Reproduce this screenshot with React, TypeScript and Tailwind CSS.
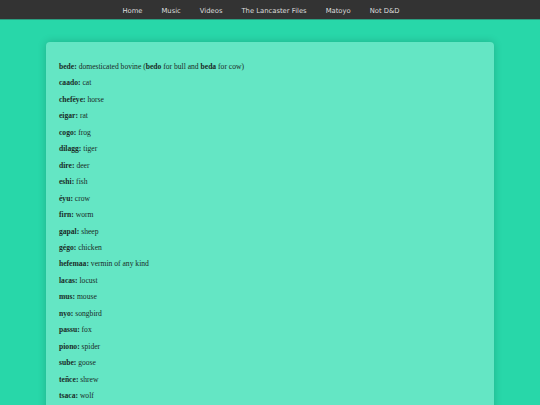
const navItems = ['Home', 'Music', 'Videos', 'The Lancaster Files', 'Matoyo', 'Not D&D'];

type Entry = { word: string; meaning: React.ReactNode };

const entries: Entry[] = [
  {
    word: 'bede',
    meaning: (
      <>
        domesticated bovine (<b>bedo</b> for bull and <b>beda</b> for cow)
      </>
    ),
  },
  { word: 'caado', meaning: 'cat' },
  { word: 'chefëye', meaning: 'horse' },
  { word: 'eigar', meaning: 'rat' },
  { word: 'cogo', meaning: 'frog' },
  { word: 'dilagg', meaning: 'tiger' },
  { word: 'dire', meaning: 'deer' },
  { word: 'eshi', meaning: 'fish' },
  { word: 'éyu', meaning: 'crow' },
  { word: 'firn', meaning: 'worm' },
  { word: 'gapal', meaning: 'sheep' },
  { word: 'gégo', meaning: 'chicken' },
  { word: 'hefemaa', meaning: 'vermin of any kind' },
  { word: 'lacas', meaning: 'locust' },
  { word: 'mus', meaning: 'mouse' },
  { word: 'nyo', meaning: 'songbird' },
  { word: 'passu', meaning: 'fox' },
  { word: 'piono', meaning: 'spider' },
  { word: 'sube', meaning: 'goose' },
  { word: 'teñce', meaning: 'shrew' },
  { word: 'tsaca', meaning: 'wolf' },
];

export default function App() {
  return (
    <div className="bg-[#28d7a9] overflow-hidden h-[405px]">
      <nav className="h-5 bg-[#333333] flex items-center justify-center gap-[19px] pt-[4px] pr-[18px] border-b border-[#2a9e80]">
        {navItems.map((item) => (
          <a
            key={item}
            className="text-[6.8px] text-[#dddddd] font-['DejaVu_Sans',sans-serif] leading-none"
          >
            {item}
          </a>
        ))}
      </nav>
      <main className="px-[46px] pt-[22px]">
        <div className="bg-[#64e6c4] rounded-[4px] shadow-[0_0_8px_rgba(0,0,0,0.18)] px-[13px] pt-[17px] pb-4">
          {entries.map((e) => (
            <p
              key={e.word}
              className="font-['Liberation_Serif',serif] text-[7.6px] leading-[16.45px] text-[#1a2b26]"
            >
              <b>{e.word}:</b> {e.meaning}
            </p>
          ))}
        </div>
      </main>
    </div>
  );
}
